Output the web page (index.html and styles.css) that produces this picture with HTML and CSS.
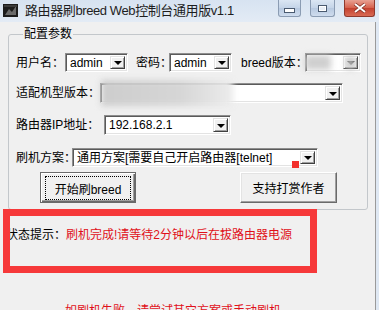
FILE: index.html
```html
<!DOCTYPE html>
<html lang="zh-CN">
<head>
    <meta charset="UTF-8">
    <title>路由器刷breed Web控制台通用版v1.1</title>
    <link rel="stylesheet" href="styles.css">
</head>
<body>
    <div class="window">
        <div class="titlebar">
            <svg class="app-icon" width="15" height="13" viewBox="0 0 15 13">
                <rect x="0" y="0" width="15" height="13" fill="#1c1c1c"/>
                <path d="M2 11 L6 5 L9 8 L13 2 L13 11 Z" fill="#6b6b6b"/>
                <rect x="1" y="1" width="13" height="2" fill="#3a3a3a"/>
            </svg>
            <span class="title">路由器刷breed Web控制台通用版v1.1</span>
            <div class="caption">
                <span class="cap cap-min"><i></i></span>
                <span class="cap cap-max"><i></i></span>
                <span class="cap cap-close">
                    <svg width="14" height="10" viewBox="0 0 14 10">
                        <path d="M2 1 L12 9 M12 1 L2 9" stroke="#7a2a20" stroke-width="3.4"/>
                        <path d="M2 1 L12 9 M12 1 L2 9" stroke="#fff" stroke-width="2"/>
                    </svg>
                </span>
            </div>
        </div>

        <div class="client">
            <fieldset class="group">
                <legend>配置参数</legend>

                <div class="row row-user">
                    <label class="lbl lbl-user">用户名：</label>
                    <div class="combo w-user"><span class="val">admin</span><b class="drop"></b></div>
                    <label class="lbl lbl-pw">密码：</label>
                    <div class="combo w-pw"><span class="val">admin</span><b class="drop"></b></div>
                    <label class="lbl lbl-ver">breed版本：</label>
                    <div class="combo w-ver">
                        <span class="val"></span><b class="drop"></b>
                        <span class="smudge smudge-ver"></span>
                    </div>
                </div>

                <div class="row row-model">
                    <label class="lbl lbl-model">适配机型版本：</label>
                    <div class="combo w-model">
                        <span class="val"></span><b class="drop"></b>
                        <span class="smudge smudge-model"></span>
                    </div>
                </div>

                <div class="row row-ip">
                    <label class="lbl lbl-ip">路由器IP地址：</label>
                    <div class="combo w-ip"><span class="val">192.168.2.1</span><b class="drop"></b></div>
                </div>

                <div class="row row-plan">
                    <label class="lbl lbl-plan">刷机方案：</label>
                    <div class="combo w-plan">
                        <span class="val">通用方案[需要自己开启路由器[telnet]</span><b class="drop"></b>
                        <span class="pin"></span>
                    </div>
                </div>

                <div class="row row-btns">
                    <button class="btn btn-default"><span>开始刷breed</span></button>
                    <button class="btn btn-donate">支持打赏作者</button>
                </div>
            </fieldset>

            <div class="status">状态提示：<span class="msg">刷机完成!请等待2分钟以后在拔路由器电源</span></div>
            <div class="note">如刷机失败，请尝试其它方案或手动刷机</div>

            <div class="highlight"></div>
        </div>
    </div>
</body>
</html>
```

FILE: styles.css
```css
body {
    margin: 0;
    background: #f0f0f0;
    font-family: "Liberation Sans", "Noto Sans CJK SC", sans-serif;
    font-size: 12px;
    color: #000;
    overflow: hidden;
}

.window {
    width: 379px;
    height: 310px;
    background: #dfe8f3;
    overflow: hidden;
}

/* title bar */
.titlebar {
    height: 22px;
    display: flex;
    align-items: flex-start;
    background: linear-gradient(#d7e3f1, #e3ebf5);
}

.app-icon {
    margin: 4px 0 0 3px;
}

.title {
    margin: 3px 0 0 7px;
    font-size: 13px;
    line-height: 16px;
    color: #1e1e1e;
    letter-spacing: -0.4px;
}

.caption {
    margin-left: auto;
    display: flex;
    gap: 9px;
    margin-right: 4px;
}

.cap {
    height: 17px;
    display: flex;
    align-items: center;
    justify-content: center;
    border: 1px solid #8b9cb3;
    border-top: 0;
    border-radius: 0 0 3px 3px;
    background: linear-gradient(#dbe6f3, #c4d4e8 50%, #b7c9e0 51%, #cfdcee);
    box-sizing: border-box;
}

.cap-min { width: 23px; }
.cap-max { width: 25px; }
.cap-close {
    width: 31px;
    border-color: #8f3a2e;
    background: linear-gradient(#e8a193, #d6604c 50%, #c4412f 51%, #d86a55);
}

.cap-min i {
    width: 9px;
    height: 3px;
    margin-top: 4px;
    background: #fff;
    border: 1px solid #4a5a70;
}

.cap-max i {
    width: 7px;
    height: 5px;
    border: 1px solid #4a5a70;
    box-shadow: inset 0 0 0 1px #fff;
    background: #e8eef6;
}

/* client area */
.client {
    position: relative;
    width: 376px;
    height: 288px;
    background: #f0f0f0;
    border-right: 1px solid #9a9a9a;
    box-sizing: border-box;
    padding: 5px 0 0 8px;
}

.group {
    width: 360px;
    height: 183px;
    box-sizing: border-box;
    margin: 0;
    padding: 12px 0 0 7px;
    border: 1px solid #c3c7cb;
    border-radius: 3px;
}

.group legend {
    padding: 0 1px;
    margin-left: 7px;
    line-height: 14px;
}

.row {
    display: flex;
    align-items: center;
}

.lbl {
    white-space: nowrap;
    line-height: 14px;
}

.row-user { height: 19px; }
.lbl-user { width: 49px; }
.lbl-pw { width: 33px; margin-left: 8px; }
.lbl-ver { width: 64px; margin-left: 9px; }

.row-model { height: 20px; margin-top: 11px; }
.lbl-model { width: 84px; }

.row-ip { height: 20px; margin-top: 12px; }
.lbl-ip { width: 88px; }

.row-plan { height: 19px; margin-top: 13px; }
.lbl-plan { width: 56px; }

.row-btns { height: 31px; margin-top: 5px; align-items: stretch; }

/* sunken classic combo box */
.combo {
    position: relative;
    height: 100%;
    display: flex;
    align-items: center;
    box-sizing: border-box;
    background: #fff;
    border: 1px solid;
    border-color: #8e8e8e #ffffff #ffffff #8e8e8e;
    box-shadow: inset 1px 1px 0 #5a5a5a, inset -1px -1px 0 #e3e3e3;
    padding: 2px;
}

.combo .val {
    flex: 1;
    padding-left: 2px;
    white-space: nowrap;
    overflow: hidden;
    line-height: 14px;
}

.w-user { width: 63px; }
.w-pw { width: 63px; }
.w-ver { width: 56px; }
.w-model { width: 243px; }
.w-ip { width: 127px; }
.w-plan { width: 246px; }

.drop {
    width: 15px;
    height: 100%;
    box-sizing: border-box;
    background: #f0f0f0;
    border: 1px solid;
    border-color: #e3e3e3 #404040 #404040 #e3e3e3;
    box-shadow: inset 1px 1px 0 #fff, inset -1px -1px 0 #a0a0a0;
    display: flex;
    align-items: center;
    justify-content: center;
}

.drop::after {
    content: "";
    border-left: 4px solid transparent;
    border-right: 4px solid transparent;
    border-top: 4px solid #000;
    margin-top: 1px;
}

/* blurred areas of the capture */
.smudge {
    position: absolute;
    background: #cfcfcf;
    filter: blur(3px);
}

.smudge-ver {
    left: -1px;
    top: 1px;
    width: 26px;
    height: 15px;
}

.smudge-ver::after {
    content: "";
    position: absolute;
    left: 41px;
    top: 2px;
    width: 9px;
    height: 12px;
    background: #c8c8c8;
}

.smudge-model {
    left: 0;
    top: -4px;
    width: 132px;
    height: 26px;
    background: linear-gradient(90deg, #cdcdcd, #d6d6d6 60%, #ececec);
}

.pin {
    position: absolute;
    left: 219px;
    top: 12px;
    width: 7px;
    height: 7px;
    background: #f2302d;
}

/* buttons */
.btn {
    font: inherit;
    padding: 0;
    background: #f0f0f0;
    box-sizing: border-box;
    border: 1px solid;
    cursor: default;
}

.btn-default {
    width: 96px;
    margin-left: 24px;
    border-color: #6a6a6a;
    box-shadow: inset 1px 1px 0 #fff, inset -1px -1px 0 #6a6a6a, inset -2px -2px 0 #a0a0a0;
    padding: 3px 4px 4px 4px;
}

.btn-default span {
    display: flex;
    height: 100%;
    align-items: center;
    justify-content: center;
    border: 1px dotted #000;
}

.btn-donate {
    width: 97px;
    margin-left: 104px;
    border-color: #fff #6a6a6a #6a6a6a #fff;
    box-shadow: inset -1px -1px 0 #a0a0a0, inset 1px 1px 0 #e3e3e3;
}

/* status */
.status {
    margin-top: 18px;
    margin-left: -2px;
    line-height: 14px;
    white-space: nowrap;
}

.status .msg {
    color: #e0101a;
}

.note {
    margin: 62px 0 0 57px;
    color: #e0101a;
    line-height: 14px;
    white-space: nowrap;
}

.highlight {
    position: absolute;
    left: 3px;
    top: 187px;
    width: 314px;
    height: 64px;
    box-sizing: border-box;
    border: 7px solid #f6393a;
}
```
